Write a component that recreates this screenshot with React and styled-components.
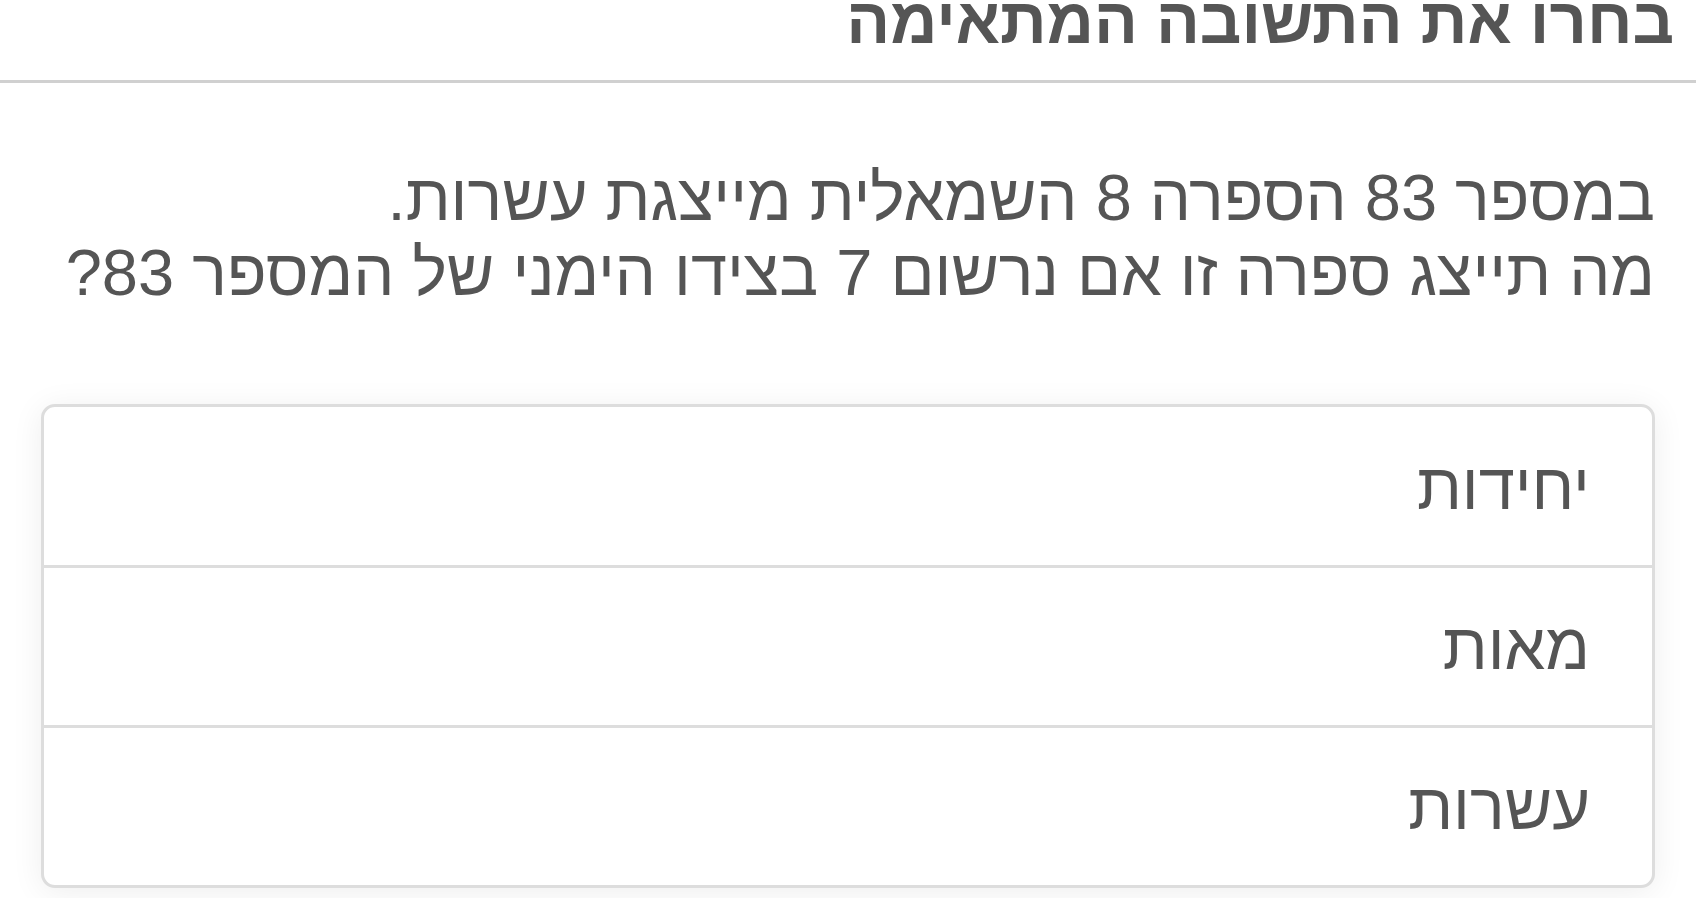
import React from "react";
import styled, { createGlobalStyle } from "styled-components";

const GlobalStyle = createGlobalStyle`
  html, body {
    margin: 0;
    padding: 0;
    background: #ffffff;
  }
  body {
    font-family: "Liberation Sans", Arial, "DejaVu Sans", sans-serif;
    color: #555555;
  }
  * { box-sizing: border-box; }
`;

const Page = styled.div`
  direction: rtl;
  width: 100%;
  min-height: 898px;
  overflow: hidden;
`;

const Header = styled.header`
  height: 83px;
  display: flex;
  align-items: flex-end;
  padding: 0 22px 27px;
  border-bottom: 3px solid #d0d0d0;
`;

const Title = styled.h1`
  margin: 0;
  font-size: 65px;
  line-height: 64px;
  font-weight: 700;
  color: #555555;
  white-space: nowrap;
`;

const Content = styled.main`
  padding: 77px 41px 0;
`;

const Question = styled.p`
  margin: 0 0 94px;
  font-size: 65px;
  line-height: 75px;
  color: #555555;
`;

const Options = styled.div`
  border: 3px solid #dddddd;
  border-radius: 14px;
  background: #ffffff;
  box-shadow: 0 4px 32px rgba(0, 0, 0, 0.07);
  overflow: hidden;
`;

const Option = styled.button`
  display: flex;
  align-items: center;
  width: 100%;
  height: ${(p) => p.$height}px;
  padding: 0 62px 0 0;
  margin: 0;
  border: none;
  border-top: ${(p) => (p.$first ? "none" : "3px solid #dddddd")};
  background: transparent;
  direction: rtl;
  text-align: right;
  font-family: inherit;
  font-size: 65px;
  color: #555555;
  cursor: pointer;
`;

const answers = ["יחידות", "מאות", "עשרות"];

export default function App() {
  return (
    <>
      <GlobalStyle />
      <Page>
        <Header>
          <Title>בחרו את התשובה המתאימה</Title>
        </Header>
        <Content>
          <Question>
            במספר 83 הספרה 8 השמאלית מייצגת עשרות.
            <br />
            מה תייצג ספרה זו אם נרשום 7 בצידו הימני של המספר 83?
          </Question>
          <Options>
            {answers.map((a, i) => (
              <Option key={a} $first={i === 0} $height={i === 0 ? 158 : 160}>
                {a}
              </Option>
            ))}
          </Options>
        </Content>
      </Page>
    </>
  );
}
